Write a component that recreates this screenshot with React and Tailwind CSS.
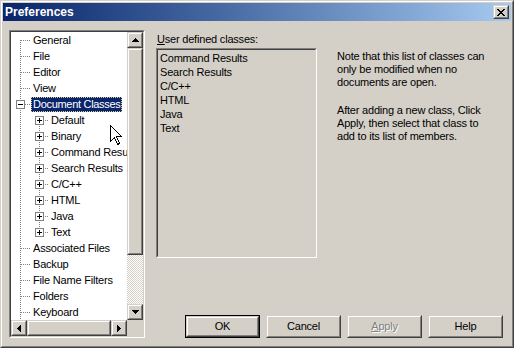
import React from "react";

function Raised({ className = "", children }) {
  return (
    <div className={`flex border border-t-[#d4d0c8] border-l-[#d4d0c8] border-r-[#404040] border-b-[#404040] ${className}`}>
      <div className="flex flex-1 items-center justify-center border border-t-white border-l-white border-r-[#808080] border-b-[#808080] bg-[#d4d0c8]">
        {children}
      </div>
    </div>
  );
}

function Sunken({ className = "", innerClass = "", children }) {
  return (
    <div className={`flex border border-t-[#808080] border-l-[#808080] border-r-white border-b-white ${className}`}>
      <div className={`flex-1 border border-t-[#404040] border-l-[#404040] border-r-[#d4d0c8] border-b-[#d4d0c8] ${innerClass}`}>
        {children}
      </div>
    </div>
  );
}

const Up = () => (
  <svg width="7" height="4" shapeRendering="crispEdges">
    <rect x="3" y="0" width="1" height="1" fill="#000" />
    <rect x="2" y="1" width="3" height="1" fill="#000" />
    <rect x="1" y="2" width="5" height="1" fill="#000" />
    <rect x="0" y="3" width="7" height="1" fill="#000" />
  </svg>
);
const Down = () => (
  <svg width="7" height="4" shapeRendering="crispEdges">
    <rect x="0" y="0" width="7" height="1" fill="#000" />
    <rect x="1" y="1" width="5" height="1" fill="#000" />
    <rect x="2" y="2" width="3" height="1" fill="#000" />
    <rect x="3" y="3" width="1" height="1" fill="#000" />
  </svg>
);
const Left = () => (
  <svg width="4" height="7" shapeRendering="crispEdges">
    <rect x="0" y="3" width="1" height="1" fill="#000" />
    <rect x="1" y="2" width="1" height="3" fill="#000" />
    <rect x="2" y="1" width="1" height="5" fill="#000" />
    <rect x="3" y="0" width="1" height="7" fill="#000" />
  </svg>
);
const Right = () => (
  <svg width="4" height="7" shapeRendering="crispEdges">
    <rect x="0" y="0" width="1" height="7" fill="#000" />
    <rect x="1" y="1" width="1" height="5" fill="#000" />
    <rect x="2" y="2" width="1" height="3" fill="#000" />
    <rect x="3" y="3" width="1" height="1" fill="#000" />
  </svg>
);

const DOT = { stroke: "#808080", strokeWidth: 1, strokeDasharray: "1 1" };

function RootGutter({ first }) {
  return (
    <svg width="20" height="16" shapeRendering="crispEdges" className="shrink-0">
      <line x1="9.5" y1={first ? 8 : 0} x2="9.5" y2="16" {...DOT} />
      <line x1="10" y1="8.5" x2="19" y2="8.5" {...DOT} />
    </svg>
  );
}

function ParentGutter() {
  return (
    <svg width="20" height="16" shapeRendering="crispEdges" className="shrink-0">
      <line x1="9.5" y1="0" x2="9.5" y2="4" {...DOT} />
      <line x1="9.5" y1="14" x2="9.5" y2="16" {...DOT} />
      <rect x="5.5" y="4.5" width="8" height="8" fill="#fff" stroke="#808080" />
      <line x1="7" y1="8.5" x2="12" y2="8.5" stroke="#000" />
      <line x1="14" y1="8.5" x2="19" y2="8.5" {...DOT} />
    </svg>
  );
}

function ChildGutter({ first, last }) {
  return (
    <svg width="38" height="16" shapeRendering="crispEdges" className="shrink-0">
      <line x1="9.5" y1="0" x2="9.5" y2="16" {...DOT} />
      {!first && <line x1="28.5" y1="0" x2="28.5" y2="4" {...DOT} />}
      {!last && <line x1="28.5" y1="14" x2="28.5" y2="16" {...DOT} />}
      <rect x="24.5" y="4.5" width="8" height="8" fill="#fff" stroke="#808080" />
      <line x1="26" y1="8.5" x2="31" y2="8.5" stroke="#000" />
      <line x1="28.5" y1="6" x2="28.5" y2="11" stroke="#000" />
      <line x1="34" y1="8.5" x2="38" y2="8.5" {...DOT} />
    </svg>
  );
}

const tree = [
  { t: "General", k: "root", first: true },
  { t: "File", k: "root" },
  { t: "Editor", k: "root" },
  { t: "View", k: "root" },
  { t: "Document Classes", k: "parent", sel: true },
  { t: "Default", k: "child", first: true },
  { t: "Binary", k: "child" },
  { t: "Command Results", k: "child" },
  { t: "Search Results", k: "child" },
  { t: "C/C++", k: "child" },
  { t: "HTML", k: "child" },
  { t: "Java", k: "child" },
  { t: "Text", k: "child", last: true },
  { t: "Associated Files", k: "root" },
  { t: "Backup", k: "root" },
  { t: "File Name Filters", k: "root" },
  { t: "Folders", k: "root" },
  { t: "Keyboard", k: "root" },
];

function TreeRow({ item }) {
  return (
    <div className="flex h-[16px] items-start whitespace-nowrap">
      {item.k === "root" && <RootGutter first={item.first} />}
      {item.k === "parent" && <ParentGutter />}
      {item.k === "child" && <ChildGutter first={item.first} last={item.last} />}
      <span
        className={
          item.sel
            ? "mt-[1px] inline-block h-[15px] pl-[2px] pr-[1px] leading-[14px] tracking-[-0.3px] bg-[#0a246a] text-white outline-1 outline-dotted outline-[#d8d090] -outline-offset-1"
            : "mt-[1px] inline-block h-[15px] px-[2px] leading-[14px] text-black"
        }
      >
        {item.t}
      </span>
    </div>
  );
}

function Button({ children, def, disabled }) {
  const inner = (
    <Raised className={def ? "h-full w-full" : "h-[23px] w-[75px]"}>
      <span
        className={
          disabled
            ? "text-[#808080] [text-shadow:1px_1px_0_#ffffff]"
            : "text-black"
        }
      >
        {children}
      </span>
    </Raised>
  );
  if (def) {
    return <div className="flex h-[23px] w-[75px] border border-black">{inner}</div>;
  }
  return inner;
}

export default function App() {
  return (
    <div className="relative h-[348px] w-[514px] border border-t-[#d4d0c8] border-l-[#d4d0c8] border-r-[#404040] border-b-[#404040] bg-[#d4d0c8] text-[11px] tracking-[-0.2px] font-['Liberation_Sans',Arial,sans-serif] text-black">
      <div className="flex h-full flex-col border border-t-white border-l-white border-r-[#808080] border-b-[#808080] p-[1px]">
        {/* Title bar */}
        <div className="flex h-[18px] shrink-0 items-center justify-between bg-linear-to-r from-[#0a246a] to-[#a6caf0] pl-[2px] pr-[2px]">
          <span className="text-[12px] font-bold leading-[18px] tracking-normal text-white">Preferences</span>
          <Raised className="h-[14px] w-[16px]">
            <svg width="8" height="7" shapeRendering="crispEdges">
              <rect x="0" y="0" width="2" height="1" />
              <rect x="6" y="0" width="2" height="1" />
              <rect x="1" y="1" width="2" height="1" />
              <rect x="5" y="1" width="2" height="1" />
              <rect x="2" y="2" width="4" height="1" />
              <rect x="3" y="3" width="2" height="1" />
              <rect x="2" y="4" width="4" height="1" />
              <rect x="1" y="5" width="2" height="1" />
              <rect x="5" y="5" width="2" height="1" />
              <rect x="0" y="6" width="2" height="1" />
              <rect x="6" y="6" width="2" height="1" />
            </svg>
          </Raised>
        </div>

        {/* Body */}
        <div className="flex flex-1 pl-[6px] pt-[9px]">
          {/* Tree view */}
          <Sunken className="h-[308px] w-[136px] shrink-0" innerClass="grid grid-cols-[116px_16px] grid-rows-[288px_16px] bg-white">
            <div className="overflow-hidden">
              {tree.map((it) => (
                <TreeRow key={it.t + it.k} item={it} />
              ))}
            </div>
            <div className="flex flex-col">
              <Raised className="h-[16px] w-[16px]"><Up /></Raised>
              <Raised className="h-[207px] w-[16px]" />
              <div className="flex-1 bg-[image:repeating-conic-gradient(#ffffff_0_25%,#d4d0c8_0_50%)] bg-[length:2px_2px]" />
              <Raised className="h-[16px] w-[16px]"><Down /></Raised>
            </div>
            <div className="flex">
              <Raised className="h-[16px] w-[16px]"><Left /></Raised>
              <Raised className="h-[16px] flex-1" />
              <Raised className="h-[16px] w-[16px]"><Right /></Raised>
            </div>
            <div className="bg-[#d4d0c8]" />
          </Sunken>

          {/* Right side */}
          <div className="ml-[11px] flex h-[308px] flex-1 flex-col pr-[8px]">
            <div className="flex">
              <div className="flex w-[161px] flex-col pt-[2px]">
                <div className="h-[14px] pl-[1px] leading-[14px]">
                  <span className="underline underline-offset-[1px]">U</span>ser defined classes:
                </div>
                <Sunken className="mt-[2px] h-[210px] w-[161px]" innerClass="bg-[#d4d0c8] pt-[1px] pl-[2px]">
                  {["Command Results", "Search Results", "C/C++", "HTML", "Java", "Text"].map((t) => (
                    <div key={t} className="h-[14px] leading-[14px] whitespace-nowrap">{t}</div>
                  ))}
                </Sunken>
              </div>
              <div className="ml-[20px] pt-[20px] leading-[13px] whitespace-nowrap">
                <div>Note that this list of classes can</div>
                <div>only be modified when no</div>
                <div>documents are open.</div>
                <div className="mt-[15px]">After adding a new class, Click</div>
                <div>Apply, then select that class to</div>
                <div>add to its list of members.</div>
              </div>
            </div>
            <div className="mt-auto flex justify-end gap-[6px]">
              <Button def>OK</Button>
              <Button>Cancel</Button>
              <Button disabled>
                <span className="underline">A</span>pply
              </Button>
              <Button>Help</Button>
            </div>
          </div>
        </div>
      </div>

      {/* mouse pointer */}
      <svg className="absolute left-[109px] top-[124px]" width="13" height="21" shapeRendering="crispEdges">
        <path d="M0.5 0.5 L0.5 16.5 L4.5 12.5 L7.5 19.5 L9.5 18.5 L6.5 11.5 L11.5 11.5 Z" fill="#fff" stroke="#000" strokeWidth="1" />
      </svg>
    </div>
  );
}
